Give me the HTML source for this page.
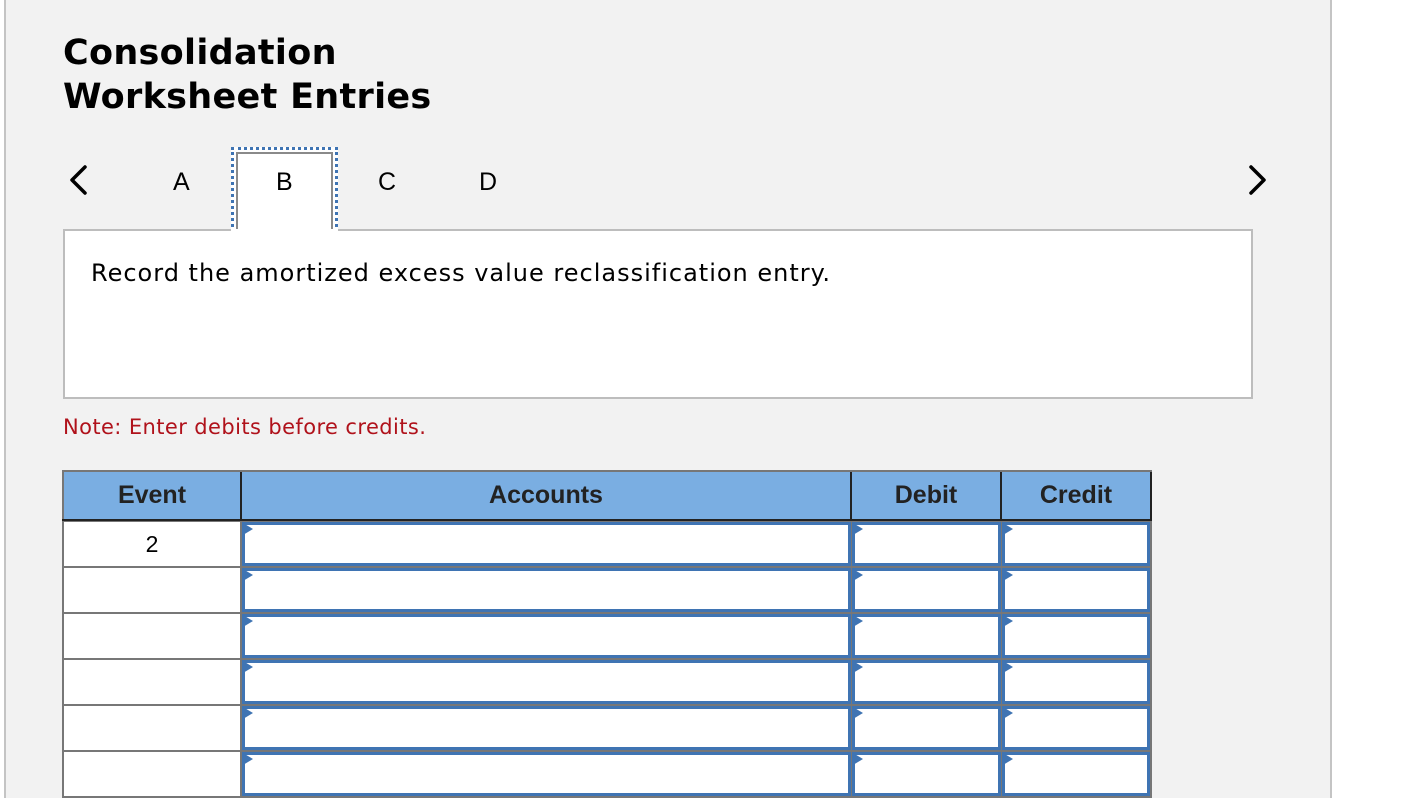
<!DOCTYPE html>
<html><head><style>
*{margin:0;padding:0;box-sizing:border-box}
body{width:1416px;height:798px;background:#fff;position:relative;overflow:hidden;font-family:"DejaVu Sans","Liberation Sans",sans-serif}
.panel{position:absolute;left:4px;top:0;width:1328px;height:798px;background:#f2f2f2;border-left:2px solid #c4c4c4;border-right:2px solid #c4c4c4}
.abs{position:absolute}
h1{position:absolute;left:63px;top:31px;font-size:35px;line-height:44px;font-weight:bold;color:#000;letter-spacing:0.3px}
.tab{position:absolute;top:168px;font-family:"Liberation Sans",sans-serif;font-size:25px;color:#000}
.cell{position:absolute;background:#fff}
.hdr{position:absolute;top:472px;height:49px;background:#7aaee2;border-right:2px solid #222;font-family:"Liberation Sans",sans-serif;font-weight:bold;font-size:25px;color:#222;text-align:center;line-height:47px}
.inp{position:absolute;background:#fff;border:3px solid #3f74b3}
.tri{position:absolute;width:0;height:0;border-top:6px solid transparent;border-bottom:6px solid transparent;border-left:10px solid #3f74b3}
</style></head><body>
<div class="panel"></div>
<h1>Consolidation<br>Worksheet Entries</h1>
<svg class="abs" style="left:66px;top:164px" width="24" height="32"><path d="M19 3 L6 16 L19 29" stroke="#000" stroke-width="3.5" fill="none" stroke-linecap="round" stroke-linejoin="round"/></svg>
<svg class="abs" style="left:1246px;top:164px" width="24" height="32"><path d="M5 3 L18 16 L5 29" stroke="#000" stroke-width="3.5" fill="none" stroke-linecap="round" stroke-linejoin="round"/></svg>
<div class="tab" style="left:173px">A</div>
<div class="abs" style="left:231px;top:147px;width:107px;height:86px;border:3px dotted #3f74b3;background:#fff"><div style="position:absolute;left:2px;top:2px;right:2px;bottom:0;border:2px solid #8a8a8a;border-bottom:none"></div></div>
<div class="tab" style="left:276px">B</div>
<div class="tab" style="left:378px">C</div>
<div class="tab" style="left:479px">D</div>
<div class="abs" style="left:63px;top:229px;width:1190px;height:170px;background:#fff;border:2px solid #bdbdbd;border-top:none"></div>
<div class="abs" style="left:63px;top:229px;width:168px;height:2px;background:#bdbdbd"></div>
<div class="abs" style="left:338px;top:229px;width:915px;height:2px;background:#bdbdbd"></div>
<div class="abs" style="left:91px;top:259px;font-size:24px;letter-spacing:1px;color:#000">Record the amortized excess value reclassification entry.</div>
<div class="abs" style="left:63px;top:415px;font-size:21px;letter-spacing:0.4px;color:#b0121b">Note: Enter debits before credits.</div>
<div class="abs" style="left:62px;top:470px;width:1090px;height:328px;background:#777"></div>
<div class="hdr" style="left:64px;width:178px">Event</div>
<div class="hdr" style="left:242px;width:610px">Accounts</div>
<div class="hdr" style="left:852px;width:150px">Debit</div>
<div class="hdr" style="left:1002px;width:150px;border-right:2px solid #222">Credit</div>
<div class="abs" style="left:62px;top:519px;width:1090px;height:2px;background:#222"></div>
<div id="rows"></div>
<script>
var h='';
for(var i=0;i<6;i++){
 var y=522+i*46;
 h+='<div class="cell" style="left:64px;top:'+y+'px;width:176px;height:44px;font-family:Liberation Sans,sans-serif;font-size:23px;text-align:center;line-height:44px">'+(i==0?'2':'')+'</div>';
 [[241,611],[851,151],[1001,150]].forEach(function(c){
  h+='<div class="inp" style="left:'+(c[0]+1)+'px;top:'+y+'px;width:'+(c[1]-2)+'px;height:44px"></div>';
  h+='<div class="tri" style="left:'+(c[0]+2)+'px;top:'+(y+1)+'px"></div>';
 });
}
document.getElementById('rows').innerHTML=h;
</script>
</body></html>
